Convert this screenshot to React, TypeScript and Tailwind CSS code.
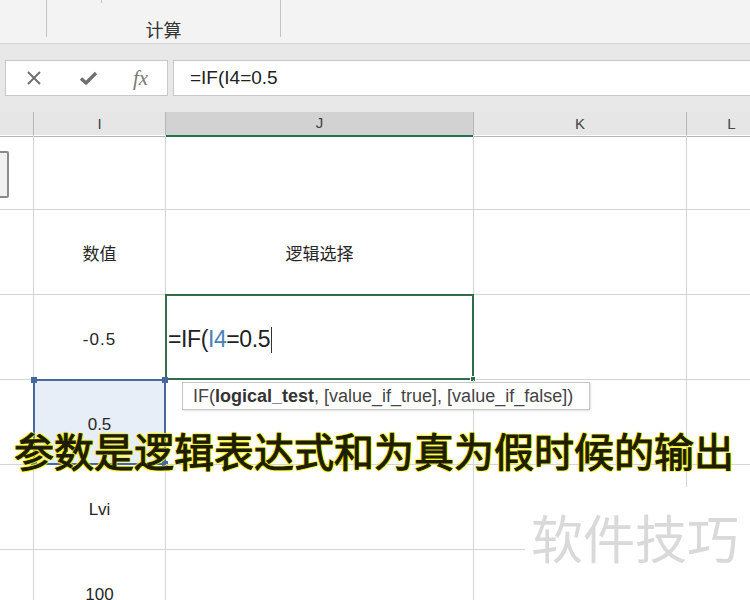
import React from "react";

const GRID = "grid grid-cols-[34px_132px_308px_213px_63px]";
const CELL = "border-r border-b border-[#d4d4d4] flex items-center justify-center";

const rows: { h: string; i: string; j: string }[] = [
  { h: "h-[75px]", i: "", j: "" },
  { h: "h-[85px]", i: "数值", j: "逻辑选择" },
  { h: "h-[85px]", i: "-0.5", j: "" },
  { h: "h-[85px]", i: "0.5", j: "" },
  { h: "h-[85px]", i: "Lvi", j: "" },
  { h: "h-[85px]", i: "100", j: "" },
];

const Handle = ({ className }: { className: string }) => (
  <span className={`absolute w-[6px] h-[6px] ${className}`} />
);

export default function App() {
  return (
    <div className="relative w-[750px] h-[600px] overflow-hidden bg-white text-[#262626] font-['Liberation_Sans','Noto_Sans_CJK_SC',sans-serif]">
      {/* ribbon */}
      <div className="h-[44px] bg-[#f3f3f3] border-b border-[#d5d5d5] flex">
        <div className="w-[47px] h-[37px] border-r border-[#c4c4c4]" />
        <div className="relative w-[234px] h-[37px] border-r border-[#c4c4c4] flex justify-center">
          <span className="absolute left-[54px] top-0 w-px h-[3px] bg-[#c4c4c4]" />
          <span className="mt-[21px] text-[18px] leading-[20px] text-[#333]">计算</span>
        </div>
      </div>

      {/* formula bar */}
      <div className="bg-[#e8e8e8] py-[16px]">
        <div className="flex h-[36px] pl-[5px] gap-[5px]">
          <div className="w-[163px] bg-white border border-[#c8c8c8] flex items-center text-[#6e6e6e]">
            <svg width="16" height="16" viewBox="0 0 16 16" className="ml-[20px]">
              <path d="M2 2L14 14M14 2L2 14" stroke="#707070" strokeWidth="2" fill="none" />
            </svg>
            <svg width="20" height="16" viewBox="0 0 20 16" className="ml-[37px]">
              <path d="M2 8.5L7 13L17 3" stroke="#707070" strokeWidth="3.4" fill="none" strokeLinejoin="round" />
            </svg>
            <span className="ml-[34px] text-[21px] italic font-['Liberation_Serif',serif] text-[#7a7a7a] leading-none">
              fx
            </span>
          </div>
          <div className="flex-1 bg-white border border-r-0 border-[#c8c8c8] flex items-center pl-[16px] text-[19px] text-[#222]">
            =IF(I4=0.5
          </div>
        </div>
      </div>

      {/* column headers */}
      <div className={`${GRID} h-[23px] bg-[#e6e6e6] text-[15px] text-[#444]`}>
        <div className="border-r border-b border-[#b5b5b5]" />
        <div className="border-r border-b border-[#b5b5b5] flex items-center justify-center">I</div>
        <div className="bg-[#d2d2d2] border-r border-[#b5b5b5] border-b-2 border-b-[#21734a] flex items-center justify-center">
          J
        </div>
        <div className="border-r border-b border-[#b5b5b5] flex items-center justify-center">K</div>
        <div className="border-b border-[#b5b5b5] flex items-center justify-center pl-[26px]">L</div>
      </div>

      {/* sheet body */}
      {rows.map((r, idx) => (
        <div key={idx} className={`${GRID} ${r.h}`}>
          <div className={`${CELL} relative`}>
            {idx === 0 && (
              <span className="absolute left-[-4px] top-[16px] w-[13px] h-[47px] border-2 border-[#8a8a8a] bg-[#f0f0f0] rounded-[2px]" />
            )}
          </div>
          <div className={`${CELL} relative pt-[5px] text-[17px] ${idx === 3 ? "bg-[#e8eef8]" : ""}`}>
            <span className={idx === 2 ? "tracking-[1px]" : ""}>{r.i}</span>
            {idx === 3 && (
              <div className="absolute inset-[-1px] border-2 border-[#46689e]">
                <Handle className="left-[-4px] top-[-4px] bg-[#46689e]" />
                <Handle className="right-[-4px] top-[-4px] bg-[#46689e]" />
                <Handle className="left-[-4px] bottom-[-4px] bg-[#46689e]" />
                <Handle className="right-[-4px] bottom-[-4px] bg-[#46689e]" />
              </div>
            )}
          </div>
          <div className={`${CELL} relative pt-[5px] text-[17px]`}>
            {r.j}
            {idx === 2 && (
              <div className="absolute inset-[-1px] border-2 border-[#2f6c48] flex items-center pt-[5px] pl-[1px] text-[23px] text-[#222] tracking-[-0.4px]">
                <span>=IF(</span>
                <span className="text-[#4a7ebb]">I4</span>
                <span>=0.5</span>
                <span className="w-px h-[26px] bg-[#333] ml-[1px]" />
                <Handle className="right-[-4px] bottom-[-4px] bg-[#2f6c48] border border-white" />
              </div>
            )}
          </div>
          <div className={CELL} />
          <div className="border-b border-[#d4d4d4]" />
        </div>
      ))}

      {/* function tooltip */}
      <div className="absolute left-[182px] top-[382px] w-[408px] h-[28px] bg-white border border-[#c6c6c6] shadow-[1px_1px_2px_rgba(0,0,0,0.12)] flex items-center pl-[10px] text-[18px] text-[#444] whitespace-nowrap">
        IF(<b className="font-bold text-[#333]">logical_test</b>, [value_if_true], [value_if_false])
      </div>

      {/* caption */}
      <div className="absolute left-[14px] top-[428px] whitespace-nowrap text-[40px] leading-[44px] font-normal text-[#1d1d05] font-['Noto_Sans_CJK_SC',sans-serif] [-webkit-text-stroke:1px_#1d1d05] [text-shadow:0_0_2px_#f5f000,1px_1px_1px_#f5f000,-1px_-1px_1px_#f5f000,1px_-1px_1px_#f5f000,-1px_1px_1px_#f5f000]">
        参数是逻辑表达式和为真为假时候的输出
      </div>

      {/* watermark */}
      <div className="absolute left-[525px] top-[487px] w-[225px] h-[113px] bg-white flex items-start pl-[6px] pt-[20px]">
        <span className="text-[52px] leading-[60px] text-[#d9d9d9] font-['Noto_Sans_CJK_SC',sans-serif]">软件技巧</span>
      </div>
    </div>
  );
}
